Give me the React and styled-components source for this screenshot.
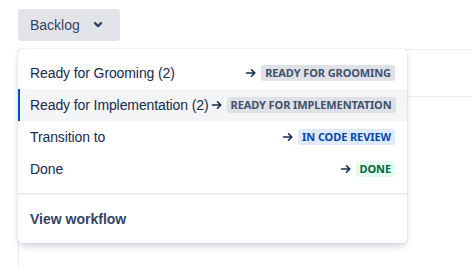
import * as React from "react"
import styled, { createGlobalStyle } from "styled-components"

const Global = createGlobalStyle`
  body {
    margin: 0;
    background: #fff;
    font-family: "Liberation Sans", Arial, sans-serif;
    color: #172b4d;
  }
`

const transitions = [
  { label: "Ready for Grooming (2)", status: "Ready for grooming", tone: "grey" },
  { label: "Ready for Implementation (2)", status: "Ready for implementation", tone: "grey", active: true },
  { label: "Transition to", status: "In code review", tone: "blue" },
  { label: "Done", status: "Done", tone: "green" },
]

const tones = {
  grey: { bg: "#dfe1e6", fg: "#42526e" },
  blue: { bg: "#deebff", fg: "#0747a6" },
  green: { bg: "#e3fcef", fg: "#006644" },
}

const Chevron = () => (
  <svg width="10" height="8" viewBox="0 0 10 8">
    <path d="M2 2.2 L5 5.2 L8 2.2" fill="none" stroke="#344563" strokeWidth="2.4" strokeLinecap="round" strokeLinejoin="round" />
  </svg>
)

const Arrow = () => (
  <svg width="12" height="12" viewBox="0 0 12 12">
    <path d="M1.5 6 H9.5 M6.5 2.8 L9.8 6 L6.5 9.2" fill="none" stroke="#172b4d" strokeWidth="1.6" strokeLinecap="round" strokeLinejoin="round" />
  </svg>
)

const StatusMenu = () => {
  return (
    <Page>
      <Global />
      <TriggerButton>
        Backlog
        <Chevron />
      </TriggerButton>
      <Board>
        <BoardHeader />
      </Board>
      <Menu>
        <Section>
          {transitions.map((t) => (
            <Item key={t.label} $active={t.active}>
              <ItemLabel>{t.label}</ItemLabel>
              <Target>
                <Arrow />
                <Lozenge $tone={t.tone}>{t.status}</Lozenge>
              </Target>
            </Item>
          ))}
        </Section>
        <Section $divided>
          <Item $strong>View workflow</Item>
        </Section>
      </Menu>
    </Page>
  )
}

//style
const Page = styled.div`
  position: relative;
  padding: 9px 0 0 18px;
  height: 258px;
  overflow: hidden;
`

const TriggerButton = styled.button`
  display: flex;
  align-items: center;
  gap: 13px;
  width: 102px;
  height: 32px;
  padding: 0 0 0 12px;
  border: none;
  border-radius: 3px;
  background: #e2e4e9;
  color: #344563;
  font-family: inherit;
  font-size: 14px;
  font-weight: 500;
`

const Board = styled.div`
  margin-top: 8px;
  height: 300px;
  border-top: 1px solid #ebecf0;
  border-left: 1px solid #ebecf0;
`

const BoardHeader = styled.div`
  height: 46px;
  border-bottom: 1px solid #ebecf0;
`

const Menu = styled.div`
  position: absolute;
  top: 49px;
  left: 18px;
  width: 389px;
  background: #fff;
  border-radius: 4px;
  box-shadow: 0 4px 8px -2px rgba(9, 30, 66, 0.25), 0 0 1px rgba(9, 30, 66, 0.31);
`

const Section = styled.div`
  padding: 8px 0;
  border-top: ${(p) => (p.$divided ? "2px solid #ebecf0" : "none")};
`

const Item = styled.div`
  display: flex;
  align-items: center;
  height: 32px;
  padding: 0 12px 0 ${(p) => (p.$active ? "10px" : "12px")};
  border-left: ${(p) => (p.$active ? "2px solid #0052cc" : "none")};
  background: ${(p) => (p.$active ? "#f4f5f7" : "transparent")};
  font-size: 14px;
  font-weight: ${(p) => (p.$strong ? 700 : 400)};
  color: ${(p) => (p.$strong ? "#344563" : "#172b4d")};
`

const ItemLabel = styled.span`
  white-space: nowrap;
  letter-spacing: -0.1px;
`

const Target = styled.span`
  display: flex;
  align-items: center;
  gap: 4px;
  margin-left: auto;
  padding-left: 2px;
`

const Lozenge = styled.span`
  display: inline-block;
  padding: 0 4px;
  height: 16px;
  line-height: 16px;
  border-radius: 3px;
  font-family: "Noto Sans", sans-serif;
  font-size: 11px;
  font-weight: 700;
  letter-spacing: -0.1px;
  text-transform: uppercase;
  background: ${(p) => tones[p.$tone].bg};
  color: ${(p) => tones[p.$tone].fg};
  white-space: nowrap;
`

export default StatusMenu
